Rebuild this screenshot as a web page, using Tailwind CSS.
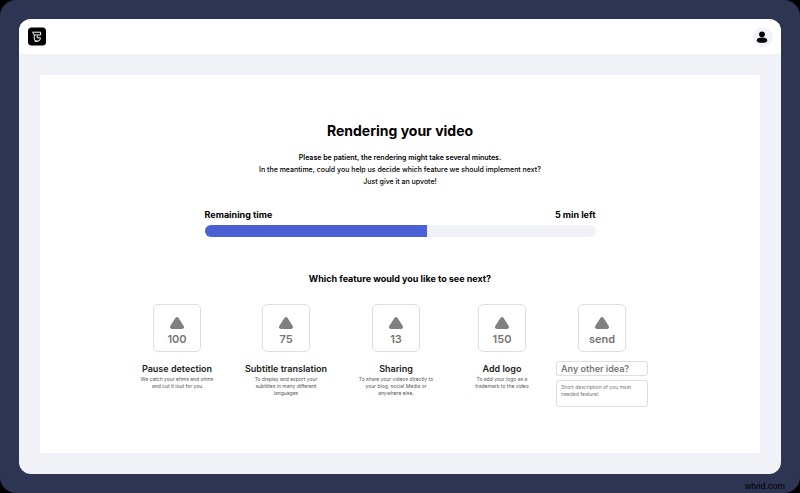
<!DOCTYPE html>
<html lang="en">
<head>
  <meta charset="UTF-8" />
  <meta name="viewport" content="width=device-width, initial-scale=1.0" />
  <title>Rendering your video</title>
  <script src="https://cdn.jsdelivr.net/npm/@tailwindcss/browser@4"></script>
</head>
<body class="bg-black font-['Inter',sans-serif] text-black">
  <div class="flex min-h-screen flex-col rounded-2xl bg-[#2e3552] px-[19px] pt-[19px]">
    <!-- App window -->
    <div class="flex flex-1 flex-col overflow-hidden rounded-xl bg-[#f2f3f9]">
      <!-- Top bar -->
      <header class="flex h-[35px] items-center justify-between bg-white px-2">
        <a href="#" aria-label="Home">
          <svg class="size-5" viewBox="0 0 20 20" fill="none">
            <rect x="1" y="0.5" width="18" height="18" rx="3.5" fill="#000" />
            <path d="M5.4 5.2H13.6V8H7.6L5.6 5.6 M7.2 8V11.2A3.1 3.1 0 0 0 13.4 11.2V10.8H10.2V8.6 M7.6 14.2H11" stroke="#fff" stroke-width="1" />
          </svg>
        </a>
        <button type="button" aria-label="Account" class="rounded-full bg-[#f2f3f9]">
          <svg class="size-5" viewBox="0 0 20 20">
            <circle cx="9" cy="7.3" r="2.9" />
            <ellipse cx="9" cy="13.2" rx="5.2" ry="2.6" />
          </svg>
        </button>
      </header>

      <main class="flex flex-1 flex-col p-[21px]">
        <div class="flex flex-1 flex-col items-center bg-white pt-[46px]">
          <h1 class="text-[14px] leading-5 font-bold">Rendering your video</h1>
          <div class="mt-[11px] text-center text-[7px] leading-3">
            <p class="font-semibold">Please be patient, the rendering might take several minutes.</p>
            <p class="font-medium">In the meantime, could you help us decide which feature we should implement next?</p>
            <p class="font-medium">Just give it an upvote!</p>
          </div>

          <!-- Progress -->
          <section class="mt-[21px] w-[391px] max-w-full">
            <div class="flex justify-between text-[9px] leading-3 font-bold">
              <span id="remaining">Remaining time</span>
              <span>5 min left</span>
            </div>
            <div role="progressbar" aria-labelledby="remaining" aria-valuenow="57" aria-valuemin="0" aria-valuemax="100" class="mt-1 h-3 overflow-hidden rounded-full bg-[#f0f2f8]">
              <div class="h-full bg-[#4a60d4]" style="width: 57%"></div>
            </div>
          </section>

          <h2 class="mt-9 text-[9px] leading-3 font-bold">Which feature would you like to see next?</h2>

          <!-- Features to vote on -->
          <div class="mt-[19px] mr-[26px] grid grid-cols-[108px_110px_110px_102px_98px] text-center text-[5px] leading-[7px] text-[#555]">
            <div class="flex flex-col items-center">
              <button type="button" class="flex size-12 flex-col items-center gap-0.5 rounded-[5px] border border-[#dedede] pt-3 text-[11px] leading-4 font-semibold text-[#777]">
                <svg class="h-3 w-4 shrink-0" viewBox="0 0 16 12" fill="#808080"><path d="M6.4 1Q8-0.8 9.6 1L14.6 8.8Q15.8 11.6 13 12H3Q.2 11.6 1.4 8.8Z" /></svg>
                100
              </button>
              <h3 class="mt-[11px] mb-px text-[9px] leading-3 font-semibold text-[#222]">Pause detection</h3>
              <p>We catch your ehms and ohms<br />and cut it iout for you</p>
            </div>
            <div class="flex flex-col items-center">
              <button type="button" class="flex size-12 flex-col items-center gap-0.5 rounded-[5px] border border-[#dedede] pt-3 text-[11px] leading-4 font-semibold text-[#777]">
                <svg class="h-3 w-4 shrink-0" viewBox="0 0 16 12" fill="#808080"><path d="M6.4 1Q8-0.8 9.6 1L14.6 8.8Q15.8 11.6 13 12H3Q.2 11.6 1.4 8.8Z" /></svg>
                75
              </button>
              <h3 class="mt-[11px] mb-px text-[9px] leading-3 font-semibold text-[#222]">Subtitle translation</h3>
              <p>To display and export your<br />subtitles in many different<br />languages</p>
            </div>
            <div class="flex flex-col items-center">
              <button type="button" class="flex size-12 flex-col items-center gap-0.5 rounded-[5px] border border-[#dedede] pt-3 text-[11px] leading-4 font-semibold text-[#777]">
                <svg class="h-3 w-4 shrink-0" viewBox="0 0 16 12" fill="#808080"><path d="M6.4 1Q8-0.8 9.6 1L14.6 8.8Q15.8 11.6 13 12H3Q.2 11.6 1.4 8.8Z" /></svg>
                13
              </button>
              <h3 class="mt-[11px] mb-px text-[9px] leading-3 font-semibold text-[#222]">Sharing</h3>
              <p>To share your videos directly to<br />your blog, social Media or<br />anywhere else.</p>
            </div>
            <div class="flex flex-col items-center">
              <button type="button" class="flex size-12 flex-col items-center gap-0.5 rounded-[5px] border border-[#dedede] pt-3 text-[11px] leading-4 font-semibold text-[#777]">
                <svg class="h-3 w-4 shrink-0" viewBox="0 0 16 12" fill="#808080"><path d="M6.4 1Q8-0.8 9.6 1L14.6 8.8Q15.8 11.6 13 12H3Q.2 11.6 1.4 8.8Z" /></svg>
                150
              </button>
              <h3 class="mt-[11px] mb-px text-[9px] leading-3 font-semibold text-[#222]">Add logo</h3>
              <p>To add your logo as a<br />trademark to the video</p>
            </div>
            <!-- Own suggestion -->
            <form class="flex flex-col items-center">
              <button type="submit" class="flex size-12 flex-col items-center gap-0.5 rounded-[5px] border border-[#dedede] pt-3 text-[11px] leading-4 font-semibold text-[#777]">
                <svg class="h-3 w-4 shrink-0" viewBox="0 0 16 12" fill="#808080"><path d="M6.4 1Q8-0.8 9.6 1L14.6 8.8Q15.8 11.6 13 12H3Q.2 11.6 1.4 8.8Z" /></svg>
                send
              </button>
              <input type="text" aria-label="Your idea" placeholder="Any other idea?" class="mt-[9px] h-[15px] w-[92px] rounded-[3px] border border-[#dedede] px-1 text-[9px] leading-3 font-semibold placeholder:text-[#777]" />
              <textarea aria-label="Description" placeholder="Short description of you most needed feature!" class="mt-1 h-[27px] w-[92px] resize-none rounded-[3px] border border-[#dedede] px-1 pt-[3px] text-[5px] leading-[7px] placeholder:text-[#777]"></textarea>
            </form>
          </div>
        </div>
      </main>
    </div>
    <footer class="-mr-1 flex h-[19px] items-center justify-end pt-1 font-['Liberation_Sans',sans-serif] text-[9px] leading-3 text-black">
      <a href="#">wtvid.com</a>
    </footer>
  </div>
</body>
</html>
